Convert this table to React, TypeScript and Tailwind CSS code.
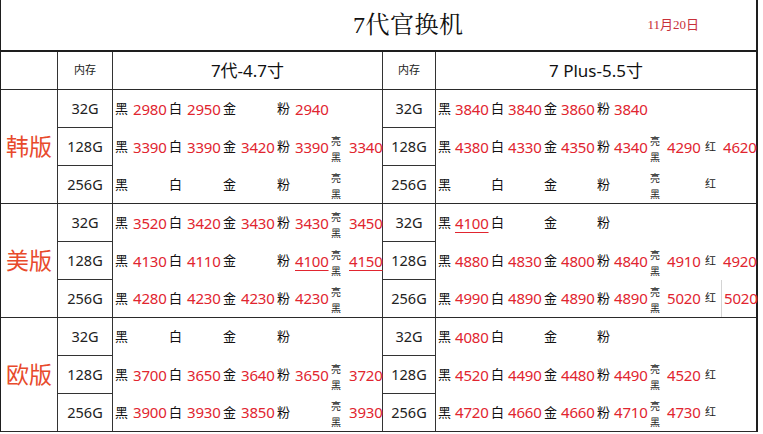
const LEFT_COLS = "grid-cols-[18px_36px_18px_36px_18px_36px_18px_36px_18px_36px]";
const RIGHT_COLS = "grid-cols-[17px_36px_17px_36px_17px_36px_17px_36px_17px_36px_20px_35px]";

type Price = string | null | { v: string; u?: boolean; line?: boolean };

type Row = {
  size: string;
  left: Price[];
  right: Price[];
  leftLiang: boolean;
  rightExtra: boolean;
};

type Group = { name: string; rows: Row[] };

const groups: Group[] = [
  {
    name: "韩版",
    rows: [
      { size: "32G", left: ["2980", "2950", null, "2940"], leftLiang: false, right: ["3840", "3840", "3860", "3840"], rightExtra: false },
      { size: "128G", left: ["3390", "3390", "3420", "3390", "3340"], leftLiang: true, right: ["4380", "4330", "4350", "4340", "4290", "4620"], rightExtra: true },
      { size: "256G", left: [null, null, null, null, null], leftLiang: true, right: [null, null, null, null, null, null], rightExtra: true },
    ],
  },
  {
    name: "美版",
    rows: [
      { size: "32G", left: ["3520", "3420", "3430", "3430", "3450"], leftLiang: true, right: [{ v: "4100", u: true }, null, null, null], rightExtra: false },
      { size: "128G", left: ["4130", "4110", null, { v: "4100", u: true }, { v: "4150", u: true }], leftLiang: true, right: ["4880", "4830", "4800", "4840", "4910", "4920"], rightExtra: true },
      { size: "256G", left: ["4280", "4230", "4230", "4230", null], leftLiang: true, right: ["4990", "4890", "4890", "4890", "5020", { v: "5020", line: true }], rightExtra: true },
    ],
  },
  {
    name: "欧版",
    rows: [
      { size: "32G", left: [null, null, null, null], leftLiang: false, right: ["4080", null, null, null], rightExtra: false },
      { size: "128G", left: ["3700", "3650", "3640", "3650", "3720"], leftLiang: true, right: ["4520", "4490", "4480", "4490", "4520", null], rightExtra: true },
      { size: "256G", left: ["3900", "3930", "3850", null, "3930"], leftLiang: true, right: ["4720", "4660", "4660", "4710", "4730", null], rightExtra: true },
    ],
  },
];

const COLORS = ["黑", "白", "金", "粉"];

function Label({ text }: { text: string }) {
  if (text === "亮黑") {
    return (
      <div className="flex flex-col items-start pl-[2px] pt-[3px] text-[10px] leading-[16px] text-[#222]">
        <span>亮</span>
        <span>黑</span>
      </div>
    );
  }
  if (text === "红") {
    return <div className="pl-[4px] text-[11px] text-[#222]">红</div>;
  }
  return <div className="pl-[2px] text-[13px] text-[#111]">{text}</div>;
}

function Value({ p }: { p: Price | undefined }) {
  if (!p) return <div />;
  const item = typeof p === "string" ? { v: p } : p;
  return (
    <div
      className={`h-full flex items-center pl-[2px] text-[15px] text-[#e1252f] tracking-[-0.2px] ${
        item.line ? "border-l border-[#d4d4d4]" : ""
      }`}
    >
      <span className={item.u ? "underline underline-offset-[3px] decoration-[1px]" : ""}>{item.v}</span>
    </div>
  );
}

function PriceRow({ cols, labels, prices }: { cols: string; labels: string[]; prices: Price[] }) {
  return (
    <div className={`grid ${cols} h-full items-center`}>
      {labels.map((l, i) => (
        <div key={i} className="contents">
          <Label text={l} />
          <Value p={prices[i]} />
        </div>
      ))}
    </div>
  );
}

function SizeColumn({ rows }: { rows: Row[] }) {
  return (
    <div className="border-r border-[#333] flex flex-col">
      {rows.map((r, i) => (
        <div
          key={r.size}
          className={`flex items-center justify-center text-[14.5px] text-[#222] ${
            i < 2 ? "h-[38px] border-b border-[#333]" : "flex-1"
          }`}
        >
          {r.size}
        </div>
      ))}
    </div>
  );
}

export default function App() {
  return (
    <div
      className="w-[763px] h-[434px] overflow-hidden bg-white"
      style={{ fontFamily: '"Noto Sans", "Noto Sans CJK SC", sans-serif' }}
    >
      <div className="w-[758px] border-l border-r-2 border-[#1e1e1e]">
        {/* title */}
        <div className="h-[52px] border-b-2 border-[#1e1e1e] flex items-center">
          <div
            className="pl-[352px] text-[24px] text-[#111] tracking-[0.5px]"
            style={{ fontFamily: '"Liberation Serif", "Noto Serif CJK SC", "Noto Sans CJK SC", serif' }}
          >
            7代官换机
          </div>
          <div
            className="ml-[184px] text-[13px] text-[#c8303a]"
            style={{ fontFamily: '"Liberation Serif", "Noto Sans CJK SC", serif' }}
          >
            11月20日
          </div>
        </div>

        {/* header */}
        <div className="grid grid-cols-[57px_55px_270px_53px_320px] h-[38px] border-b border-[#2a2a2a]">
          <div className="border-r border-[#333]" />
          <div className="border-r border-[#333] flex items-center justify-center text-[11px] text-[#222]">内存</div>
          <div className="border-r border-[#333] flex items-center justify-center text-[17px] text-[#111]">7代-4.7寸</div>
          <div className="border-r border-[#333] flex items-center justify-center text-[11px] text-[#222]">内存</div>
          <div className="flex items-center justify-center text-[17px] text-[#111]">7 Plus-5.5寸</div>
        </div>

        {groups.map((g) => (
          <div
            key={g.name}
            className="grid grid-cols-[57px_55px_270px_53px_320px] h-[114px] border-b border-[#2a2a2a]"
          >
            <div className="border-r border-[#333] flex items-center justify-center text-[23px] text-[#e84a2c]">
              {g.name}
            </div>
            <SizeColumn rows={g.rows} />
            <div className="border-r border-[#333] flex flex-col">
              {g.rows.map((r, i) => (
                <div key={r.size} className={i < 2 ? "h-[38px]" : "flex-1"}>
                  <PriceRow
                    cols={LEFT_COLS}
                    labels={r.leftLiang ? [...COLORS, "亮黑"] : COLORS}
                    prices={r.left}
                  />
                </div>
              ))}
            </div>
            <SizeColumn rows={g.rows} />
            <div className="flex flex-col">
              {g.rows.map((r, i) => (
                <div key={r.size} className={i < 2 ? "h-[38px]" : "flex-1"}>
                  <PriceRow
                    cols={RIGHT_COLS}
                    labels={r.rightExtra ? [...COLORS, "亮黑", "红"] : COLORS}
                    prices={r.right}
                  />
                </div>
              ))}
            </div>
          </div>
        ))}
      </div>
    </div>
  );
}
